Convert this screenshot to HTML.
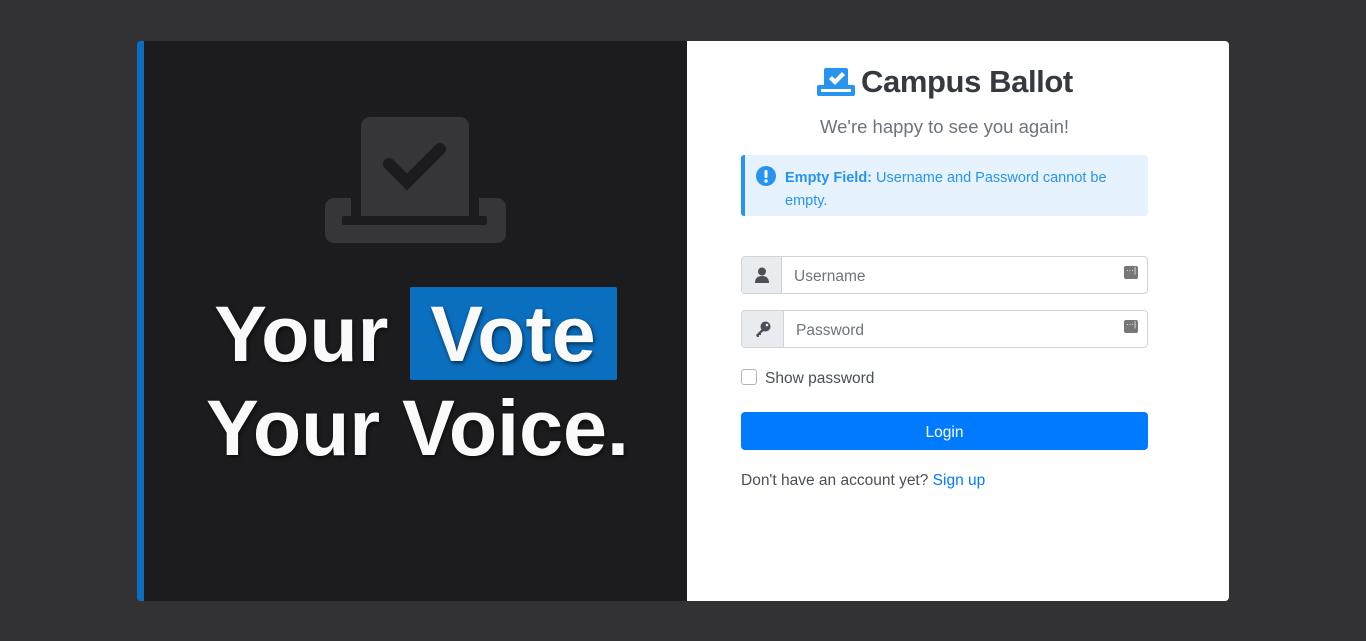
<!DOCTYPE html>
<html><head><meta charset="utf-8"><style>
*{box-sizing:border-box;margin:0;padding:0}
body{width:1366px;height:641px;background:#323234;font-family:"Liberation Sans",sans-serif;position:relative;overflow:hidden}
.card{position:absolute;left:137px;top:41px;width:1092px;height:560px;border-radius:4px;overflow:hidden;background:#fff}
.left{position:absolute;left:0;top:0;width:550px;height:560px;background:#1c1c1e;border-left:7px solid #0d6ebf}
.big{position:absolute;left:0;width:543px;text-align:center;color:#fafafa;font-weight:bold;font-size:79px;line-height:94px;text-shadow:1px 2px 4px rgba(0,0,0,.6);white-space:nowrap}
.vote{background:#0b6fbf;border-radius:2px;padding:0 21px 0 20px;display:inline-block;height:93px}
.abs{position:absolute}
.sub{color:#6c757d;font-size:18.5px;font-family:"Liberation Sans",sans-serif}
.alert{position:absolute;left:604px;top:114px;width:407px;height:61px;background:#e6f2fd;border-left:4px solid #2795f0;border-radius:3px;color:#2795f0;font-size:14.5px;line-height:23px;padding:12px 10px 0 40px}
.grp{position:absolute;left:604px;width:407px;height:38px;border:1px solid #ced4da;border-radius:4px;display:flex;overflow:hidden}
.addon{width:40px;background:#e9ecef;border-right:1px solid #ced4da;display:flex;align-items:center;justify-content:center}
.inp{flex:1;display:flex;align-items:center;padding-left:12px;padding-top:4px;color:#6c757d;font-size:15.5px;position:relative}
.pw{position:absolute;right:9px;top:9px;width:14px;height:13px;background:#777;border-radius:2px;color:#fff;font-size:8px;line-height:9px;text-align:center}
.btn{position:absolute;left:604px;top:371px;width:407px;height:38px;background:#007bff;border-radius:4px;color:#fff;font-size:15.5px;text-align:center;line-height:42px}
</style></head><body>
<div class="card">
 <div class="left">
  <svg class="abs" style="left:181px;top:76px" width="181" height="126" viewBox="0 0 181 126">
   <rect x="0" y="81" width="181" height="45" rx="9" fill="#363638"/>
   <rect x="36" y="0" width="108" height="105" rx="9" fill="#363638"/>
   <rect x="17" y="99" width="145" height="9" rx="2" fill="#1c1c1e"/>
   <rect x="26" y="81" width="10" height="18" fill="#1c1c1e"/>
   <rect x="144" y="81" width="10" height="18" fill="#1c1c1e"/>
   <polyline points="64,47 82,65 115,32" fill="none" stroke="#1c1c1e" stroke-width="12" stroke-linejoin="miter" stroke-linecap="round"/>
  </svg>
  <div class="big" style="top:246px"><span style="display:inline-block;margin-right:22px">Your</span><span class="vote">Vote</span></div>
  <div class="big" style="top:340px;left:2px">Your Voice.</div>
 </div>
 <svg class="abs" style="left:680px;top:27px" width="38" height="28" viewBox="0 0 38 28">
  <rect x="0" y="17" width="38" height="11" rx="2" fill="#2795f0"/>
  <rect x="7" y="0" width="24" height="22" rx="2" fill="#2795f0"/>
  <rect x="4" y="21" width="30" height="3" fill="#fff"/>
  <path d="M12 11 L15 8 L18 11 L25 4 L28 7 L18 17 Z" fill="#fff"/>
 </svg>
 <div class="abs" style="left:724px;top:23px;font-size:31px;font-weight:bold;color:#343a40;letter-spacing:-0.4px">Campus Ballot</div>
 <div class="abs sub" style="left:604px;width:407px;text-align:center;top:75px">We're happy to see you again!</div>
 <div class="alert">
  <svg class="abs" style="left:11px;top:11px" width="20" height="20" viewBox="0 0 20 20"><circle cx="10" cy="10" r="10" fill="#2795f0"/><rect x="8.5" y="4" width="3" height="8" rx="1.5" fill="#fff"/><circle cx="10" cy="15" r="1.7" fill="#fff"/></svg>
  <b>Empty Field:</b> Username and Password cannot be empty.
 </div>
 <div class="grp" style="top:215px"><div class="addon"><svg width="14" height="16" viewBox="0 0 14 16"><circle cx="7" cy="4.5" r="4" fill="#495057"/><path d="M0 16 Q0 9 7 9 Q14 9 14 16Z" fill="#495057"/></svg></div><div class="inp">Username<div class="pw">···|</div></div></div>
 <div class="grp" style="top:269px"><div class="addon" style="width:42px"><svg width="16" height="16" viewBox="0 0 16 16"><circle cx="10.5" cy="5.5" r="5" fill="#495057"/><path d="M7 8 L1 14 L2 16 L4 16 L4 14 L6 14 L6 12 L9 10Z" fill="#495057"/><circle cx="12" cy="4" r="1.3" fill="#e9ecef"/></svg></div><div class="inp">Password<div class="pw">···|</div></div></div>
 <div class="abs" style="left:604px;top:328px;width:16px;height:16px;border:1px solid #adb5bd;border-radius:3px"></div>
 <div class="abs" style="left:628px;top:329px;font-size:15.5px;color:#495057">Show password</div>
 <div class="btn">Login</div>
 <div class="abs" style="left:604px;top:431px;font-size:15.5px;color:#495057">Don't have an account yet? <span style="color:#007bff">Sign up</span></div>
</div>
</body></html>
